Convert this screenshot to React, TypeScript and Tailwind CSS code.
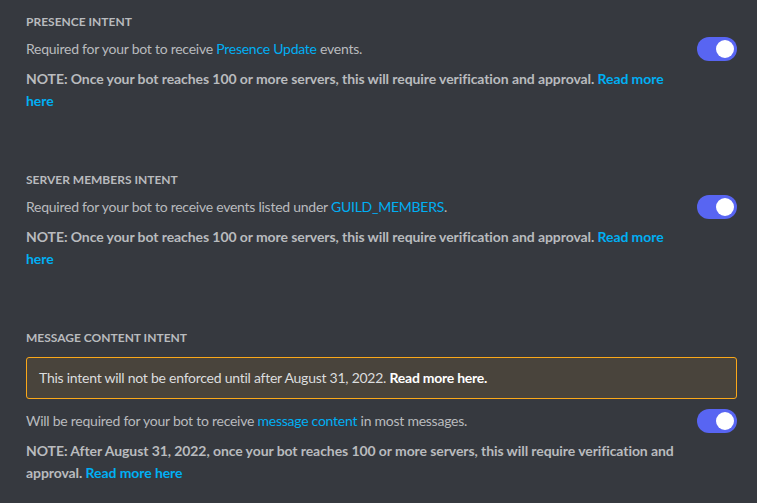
import React from "react";

function Toggle() {
  return (
    <div className="flex h-6 w-10 shrink-0 items-center justify-end rounded-full bg-[#5865f2] px-[3px]">
      <div className="h-[18px] w-[18px] rounded-full bg-white" />
    </div>
  );
}

function Link({ children, bold }: { children: React.ReactNode; bold?: boolean }) {
  return <span className={`text-[#00aff4] ${bold ? "font-bold" : ""}`}>{children}</span>;
}

function Intent({
  title,
  description,
  note,
  banner,
}: {
  title: string;
  description: React.ReactNode;
  note: React.ReactNode;
  banner?: React.ReactNode;
}) {
  return (
    <section className="flex flex-col">
      <h3 className="mb-[7px] text-xs font-bold uppercase leading-4 text-[#b9bbbe]">{title}</h3>
      {banner}
      <div className="flex items-start gap-2.5">
        <div className="flex flex-1 flex-col">
          <p className="text-sm leading-6 tracking-[-0.25px] text-[#b9bbbe]">{description}</p>
          <p className="mt-[7px] text-sm font-bold leading-[22px] tracking-[-0.08px] text-[#b9bbbe]">{note}</p>
        </div>
        <Toggle />
      </div>
    </section>
  );
}

export default function App() {
  return (
    <div
      className="flex min-h-[503px] w-full flex-col gap-[60px] bg-[#36393f] pb-6 pl-[26px] pr-5 pt-[14px]"
      style={{ fontFamily: 'Lato, "Noto Sans", sans-serif' }}
    >
      <Intent
        title="Presence Intent"
        description={
          <>
            Required for your bot to receive <Link>Presence Update</Link> events.
          </>
        }
        note={
          <>
            NOTE: Once your bot reaches 100 or more servers, this will require verification and approval.{" "}
            <Link bold>Read more here</Link>
          </>
        }
      />
      <Intent
        title="Server Members Intent"
        description={
          <>
            Required for your bot to receive events listed under <Link>GUILD_MEMBERS</Link>.
          </>
        }
        note={
          <>
            NOTE: Once your bot reaches 100 or more servers, this will require verification and approval.{" "}
            <Link bold>Read more here</Link>
          </>
        }
      />
      <Intent
        title="Message Content Intent"
        banner={
          <div className="mb-2.5 mt-1 rounded-[3px] border border-[#faa81a] bg-[#49443c] px-3 py-[9px] text-sm leading-[22px] tracking-[-0.25px] text-[#dcddde]">
            This intent will not be enforced until after August 31, 2022.{" "}
            <span className="font-bold text-white">Read more here.</span>
          </div>
        }
        description={
          <>
            Will be required for your bot to receive <Link>message content</Link> in most messages.
          </>
        }
        note={
          <>
            NOTE: After August 31, 2022, once your bot reaches 100 or more servers, this will require verification
            and approval. <Link bold>Read more here</Link>
          </>
        }
      />
    </div>
  );
}
